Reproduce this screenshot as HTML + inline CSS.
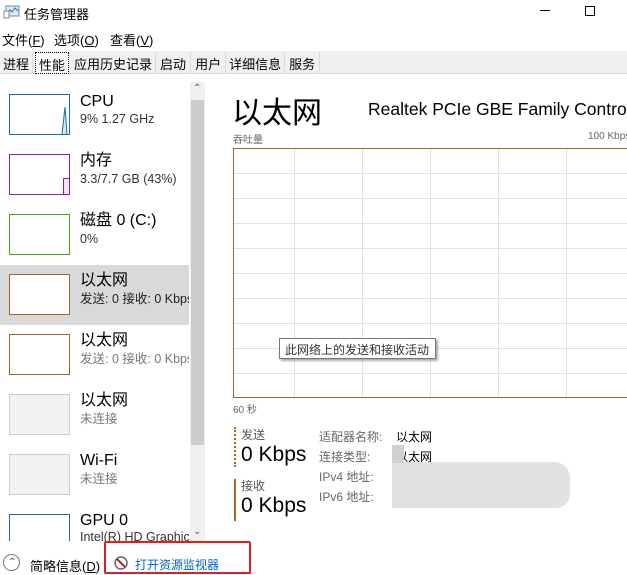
<!DOCTYPE html><html><head><meta charset="utf-8"><style>
*{margin:0;padding:0;box-sizing:border-box}
body{width:627px;height:572px;overflow:hidden;background:#fff;font-family:"Liberation Sans","Noto Sans CJK SC",sans-serif;color:#000;position:relative}
.a{position:absolute;white-space:nowrap}
.th{position:absolute;left:9px;width:61px;height:41px;background:#fff;border:1px solid}
.t1{font-size:16px;left:80px;line-height:19px}
.t2{font-size:12.5px;left:80px;color:#333;line-height:15px;width:109px;overflow:hidden}
.gl{position:absolute;background:#eadfd4}
</style></head><body>
<svg class="a" style="left:3px;top:5px" width="18" height="14"><rect x="3" y="1" width="13" height="10" fill="#dfe9f2" stroke="#6a8cae"/><polyline points="4,8 7,5 9,7 12,3 15,6" fill="none" stroke="#2a6fb0"/><rect x="1" y="6" width="5" height="7" fill="#fff" stroke="#888"/></svg>
<div class="a" style="left:24px;top:4px;font-size:13px">任务管理器</div>
<div class="a" style="left:540px;top:10px;width:10px;height:1px;background:#000"></div>
<div class="a" style="left:585px;top:6px;width:10px;height:10px;border:1px solid #000"></div>
<div class="a" style="left:2px;top:30px;font-size:13px">文件(<u>F</u>)</div>
<div class="a" style="left:54px;top:30px;font-size:13px">选项(<u>O</u>)</div>
<div class="a" style="left:110px;top:30px;font-size:13px">查看(<u>V</u>)</div>
<div class="a" style="left:0;top:51px;width:627px;height:23px;background:#f0f0f0;border-bottom:1px solid #d9d9d9"></div>
<div class="a" style="left:0;top:52px;height:22px;font-size:13px;display:flex">
<span style="padding:2px 3px;border-right:1px solid #d9d9d9">进程</span>
<span style="padding:2px 3px;background:#fff;border:1px dotted #000;margin:0 2px">性能</span>
<span style="padding:2px 3px;border-right:1px solid #d9d9d9">应用历史记录</span>
<span style="padding:2px 4px;border-right:1px solid #d9d9d9">启动</span>
<span style="padding:2px 4px;border-right:1px solid #d9d9d9">用户</span>
<span style="padding:2px 3px;border-right:1px solid #d9d9d9">详细信息</span>
<span style="padding:2px 4px;border-right:1px solid #d9d9d9">服务</span>
</div>
<div class="a" style="left:0;top:265px;width:189px;height:60px;background:#d9d9d9"></div>
<div class="th" style="top:94px;border-color:#1c6ca8"></div>
<svg class="a" style="left:60px;top:105px" width="10" height="30"><polyline points="2,29 5,2 7,29" fill="#d4e6f3" stroke="#1c6ca8"/></svg>
<div class="a t1" style="top:92px">CPU</div><div class="a t2" style="top:112px">9% 1.27 GHz</div>
<div class="th" style="top:154px;border-color:#8b22a8"></div>
<div class="a" style="left:63px;top:178px;width:6px;height:16px;background:#f1e4f5;border:1px solid #8b22a8;border-right:none;border-bottom:none"></div>
<div class="a t1" style="top:151px">内存</div><div class="a t2" style="top:172px">3.3/7.7 GB (43%)</div>
<div class="th" style="top:214px;border-color:#4ca01d"></div>
<div class="a t1" style="top:211px">磁盘 0 (C:)</div><div class="a t2" style="top:232px">0%</div>
<div class="th" style="top:274px;border-color:#a7642a"></div>
<div class="a t1" style="top:271px">以太网</div><div class="a t2" style="top:292px;color:#222">发送: 0 接收: 0 Kbps</div>
<div class="th" style="top:334px;border-color:#a7642a"></div>
<div class="a t1" style="top:331px">以太网</div><div class="a t2" style="top:352px;color:#777">发送: 0 接收: 0 Kbps</div>
<div class="th" style="top:394px;border-color:#ccc;background:#f2f2f2"></div>
<div class="a t1" style="top:391px">以太网</div><div class="a t2" style="top:412px;color:#777">未连接</div>
<div class="th" style="top:454px;border-color:#ccc;background:#f2f2f2"></div>
<div class="a t1" style="top:451px">Wi-Fi</div><div class="a t2" style="top:472px;color:#777">未连接</div>
<div class="th" style="top:514px;border-color:#1c6ca8;height:30px;border-bottom:none"></div>
<div class="a t1" style="top:511px">GPU 0</div><div class="a t2" style="top:530px;height:11px">Intel(R) HD Graphics</div>
<div class="a" style="left:0;top:541px;width:190px;height:8px;background:#fff"></div>
<div class="a" style="left:190px;top:82px;width:15px;height:460px;background:#f0f0f0"></div>
<div class="a" style="left:191px;top:100px;width:13px;height:345px;background:#cdcdcd"></div>
<div class="a" style="left:193px;top:83px;font-size:10px;color:#555">⌃</div>
<div class="a" style="left:193px;top:526px;font-size:10px;color:#555">⌄</div>
<div class="a" style="left:232px;top:88px;font-size:30px">以太网</div>
<div class="a" style="left:368px;top:99px;font-size:17.5px">Realtek PCIe GBE Family Controller</div>
<div class="a" style="left:233px;top:131px;font-size:10px;color:#666">吞吐量</div>
<div class="a" style="left:588px;top:131px;font-size:10px;color:#666">100 Kbps</div>
<div class="a" style="left:233px;top:148px;width:400px;height:250px;border:1px solid #a7642a;overflow:hidden">
<div class="gl" style="left:60px;top:0;width:1px;height:250px"></div>
<div class="gl" style="left:128px;top:0;width:1px;height:250px"></div>
<div class="gl" style="left:196px;top:0;width:1px;height:250px"></div>
<div class="gl" style="left:264px;top:0;width:1px;height:250px"></div>
<div class="gl" style="left:332px;top:0;width:1px;height:250px"></div>
<div class="gl" style="top:24px;left:0;height:1px;width:400px"></div>
<div class="gl" style="top:49px;left:0;height:1px;width:400px"></div>
<div class="gl" style="top:74px;left:0;height:1px;width:400px"></div>
<div class="gl" style="top:99px;left:0;height:1px;width:400px"></div>
<div class="gl" style="top:124px;left:0;height:1px;width:400px"></div>
<div class="gl" style="top:149px;left:0;height:1px;width:400px"></div>
<div class="gl" style="top:174px;left:0;height:1px;width:400px"></div>
<div class="gl" style="top:199px;left:0;height:1px;width:400px"></div>
<div class="gl" style="top:224px;left:0;height:1px;width:400px"></div>
</div>
<div class="a" style="left:279px;top:338px;width:157px;height:21px;background:#fff;border:1px solid #767676;box-shadow:2px 2px 2px #aaa;font-size:12px;padding:2px 5px;color:#333">此网络上的发送和接收活动</div>
<div class="a" style="left:233px;top:401px;font-size:10px;color:#666">60 秒</div>
<div class="a" style="left:234px;top:427px;width:0;height:40px;border-left:2px dotted #a7642a"></div>
<div class="a" style="left:241px;top:426px;font-size:12px;color:#555">发送</div>
<div class="a" style="left:241px;top:443px;font-size:21px">0 Kbps</div>
<div class="a" style="left:234px;top:479px;width:2px;height:42px;background:#a7642a"></div>
<div class="a" style="left:241px;top:477px;font-size:12px;color:#555">接收</div>
<div class="a" style="left:241px;top:494px;font-size:21px">0 Kbps</div>
<div class="a" style="left:319px;top:427px;font-size:12px;color:#666;line-height:20px">适配器名称:<br>连接类型:<br>IPv4 地址:<br>IPv6 地址:</div>
<div class="a" style="left:396px;top:427px;font-size:12px;line-height:20px">以太网<br>以太网</div>
<div class="a" style="left:392px;top:462px;width:178px;height:46px;background:#ddd;opacity:.85;border-radius:0 16px 14px 0"></div>
<div class="a" style="left:392px;top:445px;width:12px;height:18px;background:#d0d0d0"></div>
<div class="a" style="left:3px;top:554px;width:17px;height:17px;border:1px solid #777;border-radius:50%"></div>
<div class="a" style="left:8px;top:557px;font-size:10px;color:#555">⌃</div>
<div class="a" style="left:30px;top:556px;font-size:13px">简略信息(<u>D</u>)</div>
<div class="a" style="left:104px;top:541px;width:147px;height:33px;border:2px solid #e02020;border-radius:2px"></div>
<svg class="a" style="left:114px;top:556px" width="14" height="14"><circle cx="7" cy="7" r="6" fill="#fff" stroke="#666" stroke-width="1.5"/><line x1="3" y1="3" x2="11" y2="11" stroke="#c02020" stroke-width="2"/></svg>
<div class="a" style="left:135px;top:556px;font-size:12px;color:#0066cc">打开资源监视器</div>
</body></html>
